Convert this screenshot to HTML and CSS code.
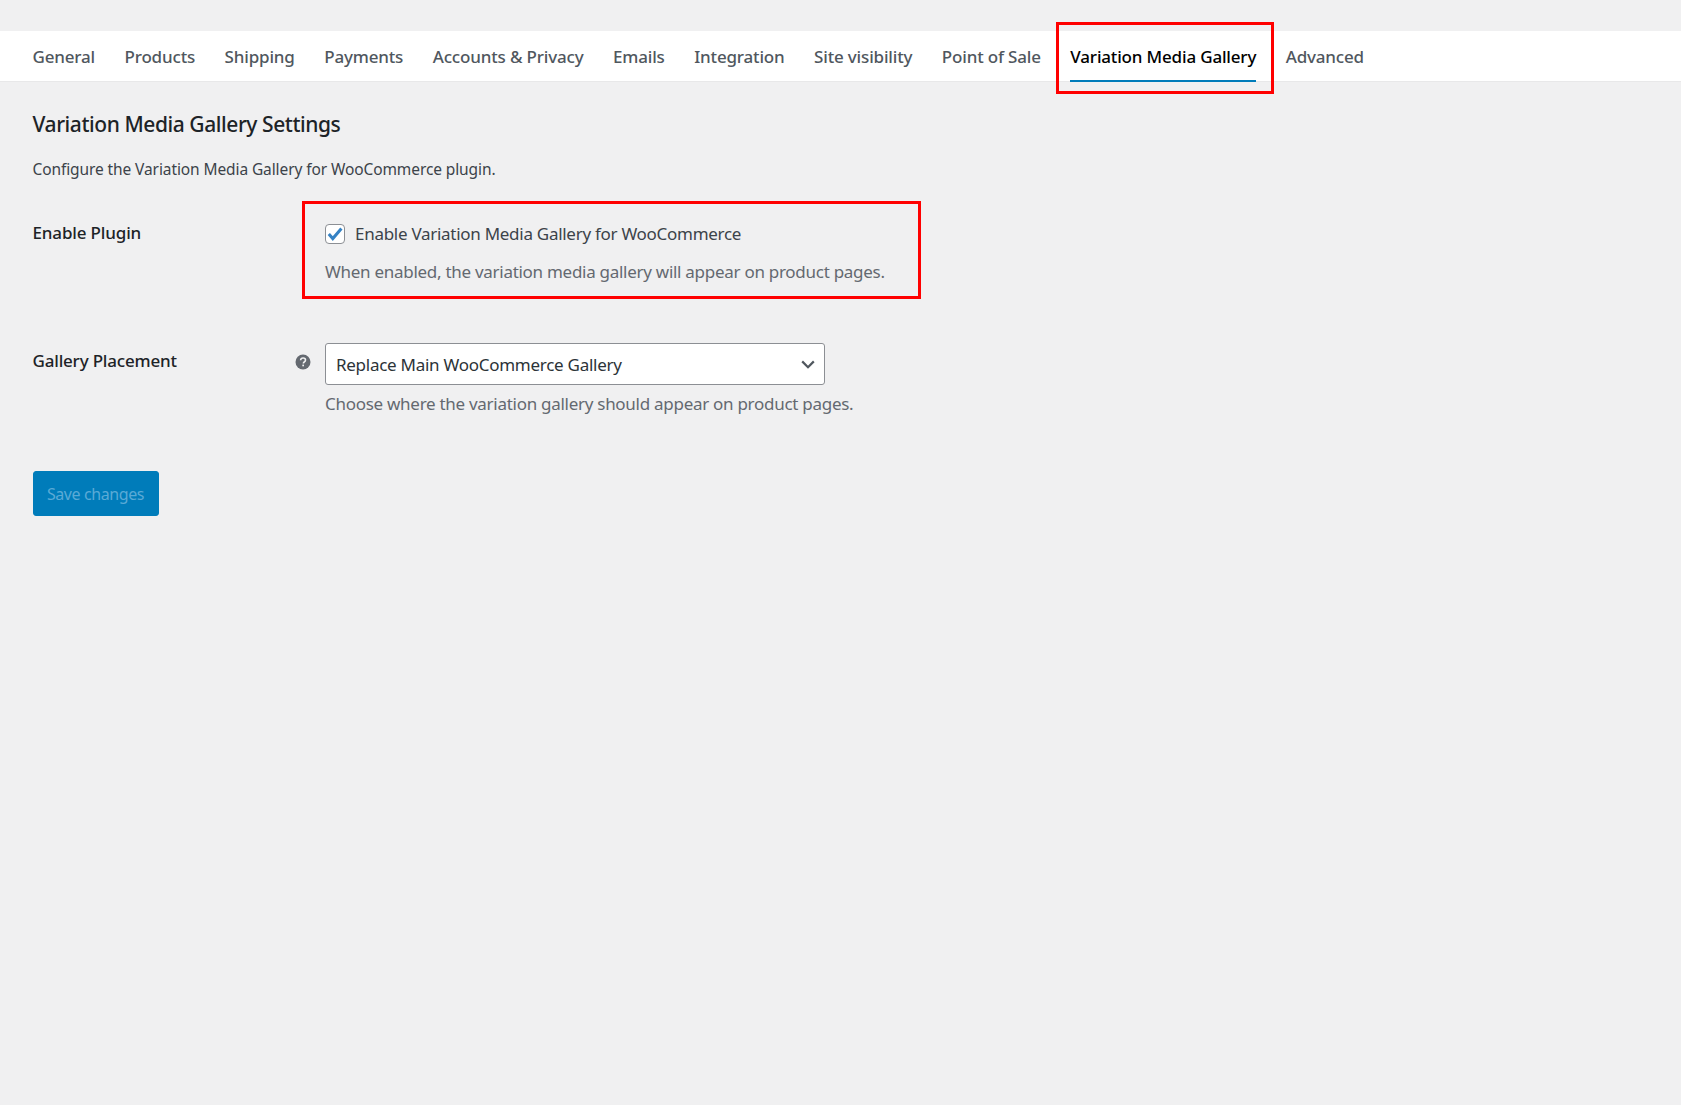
FILE: index.html
```html
<!DOCTYPE html>
<html lang="en">
<head>
<meta charset="utf-8">
<title>Variation Media Gallery Settings</title>
<link rel="stylesheet" href="styles.css">
</head>
<body>
<nav class="tabs">
  <a class="tab">General</a>
  <a class="tab">Products</a>
  <a class="tab">Shipping</a>
  <a class="tab">Payments</a>
  <a class="tab">Accounts &amp; Privacy</a>
  <a class="tab">Emails</a>
  <a class="tab">Integration</a>
  <a class="tab">Site visibility</a>
  <a class="tab">Point of Sale</a>
  <a class="tab tab-active">Variation Media Gallery</a>
  <a class="tab">Advanced</a>
</nav>
<main class="content">
  <h2 class="title">Variation Media Gallery Settings</h2>
  <p class="intro">Configure the Variation Media Gallery for WooCommerce plugin.</p>
  <div class="row row-enable">
    <div class="label">Enable Plugin</div>
    <div class="tip-cell"></div>
    <div class="field field-marked">
      <label class="check-line">
        <span class="checkbox"><svg viewBox="0 0 20 20" width="20" height="20"><path d="M3.8 10 7.8 14.6 16.4 4.6" fill="none" stroke="#3582c4" stroke-width="3"/></svg></span>
        <span>Enable Variation Media Gallery for WooCommerce</span>
      </label>
      <p class="desc desc-first">When enabled, the variation media gallery will appear on product pages.</p>
    </div>
  </div>
  <div class="row row-placement">
    <div class="label label-placement">Gallery Placement</div>
    <div class="tip-cell">
      <svg class="help" viewBox="0 0 16 16" width="16" height="16"><circle cx="8" cy="8" r="7.5" fill="#646970"/><path d="M5.6 6.2C5.7 4.8 6.7 4 8.1 4c1.4 0 2.4.8 2.4 2 0 1-.6 1.5-1.3 2-.6.4-.8.7-.8 1.4" fill="none" stroke="#f0f0f1" stroke-width="1.6"/><rect x="7.3" y="10.6" width="1.7" height="1.7" fill="#f0f0f1"/></svg>
    </div>
    <div class="field">
      <div class="select">
        <span>Replace Main WooCommerce Gallery</span>
        <svg viewBox="0 0 14 9" width="14" height="9"><path d="M1.2 1.4 7 7.2l5.8-5.8" fill="none" stroke="#50575e" stroke-width="2.2"/></svg>
      </div>
      <p class="desc">Choose where the variation gallery should appear on product pages.</p>
    </div>
  </div>
  <button class="save" type="button">Save changes</button>
</main>
</body>
</html>
```
FILE: styles.css
```css
*, *::after { box-sizing: border-box; }
html, body { margin: 0; height: 100%; }
body {
  background: #f0f0f1;
  color: #1d2327;
  font-family: "Noto Sans", "Open Sans", sans-serif;
  font-size: 16px;
}
.tabs {
  margin-top: 31px;
  height: 51px;
  background: #fff;
  border-bottom: 1px solid #e8e8e9;
  padding-left: 32.5px;
  display: flex;
  gap: 29.5px;
}
.tab {
  position: relative;
  height: 50px;
  line-height: 52px;
  font-size: 17px;
  font-weight: 500;
  color: #50575e;
  letter-spacing: -0.17px;
  white-space: nowrap;
}
.tab-active { color: #000; border-bottom: 2px solid #007cba; height: 51px; }
.tab-active::after {
  content: "";
  position: absolute;
  left: -14px; right: -18px; top: -9px; bottom: -14px;
  border: 3px solid #f00;
}
.content { padding: 0 32.5px; }
.title {
  margin: 27px 0 0;
  font-size: 21px;
  line-height: 30px;
  font-weight: 500;
  letter-spacing: -0.43px;
}
.intro {
  margin: 18px 0 0;
  font-size: 15.5px;
  line-height: 24px;
  color: #3c434a;
  letter-spacing: -0.1px;
}
.row { display: flex; align-items: flex-start; }
.row-enable { margin-top: 29px; }
.row-placement { margin-top: 58px; }
.label {
  width: 259.5px;
  font-size: 17px;
  font-weight: 500;
  letter-spacing: -0.15px;
  padding-top: 11px;
  line-height: 24px;
}
.label-placement { padding-top: 6px; letter-spacing: -0.18px; }
.tip-cell { width: 33px; padding-top: 11px; display: flex; }
.help { display: block; margin-left: 3px; }
.field { position: relative; }
.field-marked { padding-top: 10px; }
.field-marked::after {
  content: "";
  position: absolute;
  left: -23px; top: -9px; width: 619px; height: 98px;
  border: 3px solid #f00;
}
.check-line {
  display: flex;
  align-items: center;
  gap: 10px;
  font-size: 17px;
  line-height: 26px;
  color: #3c434a;
  letter-spacing: -0.28px;
  padding-top: 1px;
  margin-bottom: -1px;
}
.checkbox {
  width: 20px; height: 20px;
  border: 1px solid #8c8f94;
  border-radius: 4px;
  background: #fff;
  display: block;
  flex: none;
}
.checkbox svg { display: block; margin: -1px; }
.desc {
  margin: 0;
  font-size: 17px;
  line-height: 26px;
  color: #646970;
  letter-spacing: -0.28px;
}
.desc-first { margin-top: 13px; }
.select {
  width: 500px;
  height: 42px;
  border: 1px solid #8c8f94;
  border-radius: 3px;
  background: #fff;
  display: flex;
  align-items: center;
  justify-content: space-between;
  padding: 0 9px 0 10px;
  font-size: 17px;
  color: #2c3338;
  letter-spacing: -0.27px;
  margin-bottom: 6px;
}
.save {
  display: block;
  margin-top: 54px;
  width: 126px;
  height: 45px;
  background: #007cba;
  border: 1px solid #007cba;
  border-radius: 3px;
  color: #5aaad6;
  font: inherit;
  font-size: 16px;
  letter-spacing: -0.4px;
  padding: 0;
}
```
